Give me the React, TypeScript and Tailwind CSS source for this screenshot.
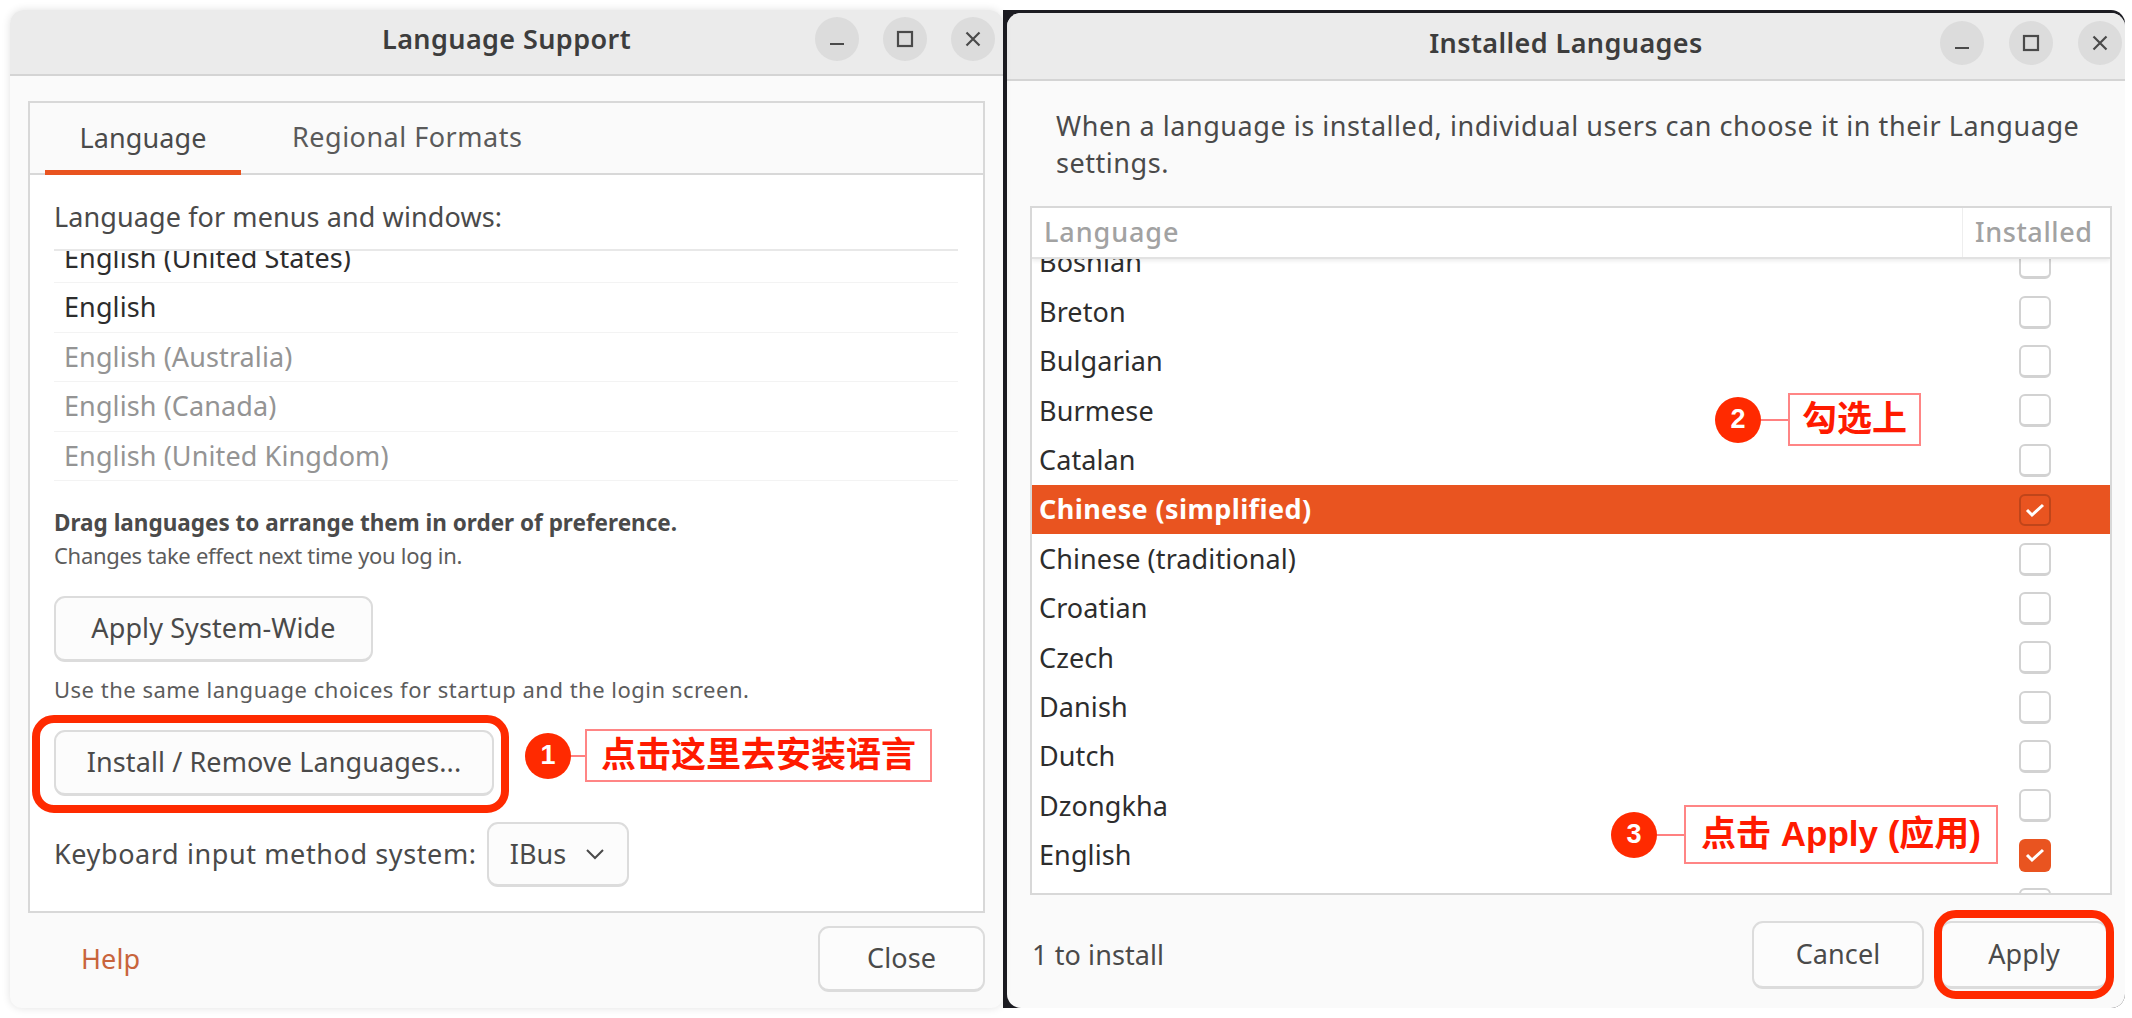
import React from 'react';

const languages = [
  'Bosnian',
  'Breton',
  'Bulgarian',
  'Burmese',
  'Catalan',
  'Chinese (simplified)',
  'Chinese (traditional)',
  'Croatian',
  'Czech',
  'Danish',
  'Dutch',
  'Dzongkha',
  'English',
  '',
];

const TitleIcon: React.FC<{ kind: 'min' | 'max' | 'close' }> = ({ kind }) => (
  <div className="w-[44px] h-[44px] rounded-full bg-[#dcdcdc] flex items-center justify-center">
    <svg width="20" height="20" viewBox="0 0 20 20" fill="none" stroke="#4a4a4a" strokeWidth="2.2">
      {kind === 'min' && <path d="M3 15h14" />}
      {kind === 'max' && <rect x="3" y="3" width="14" height="14" />}
      {kind === 'close' && <path d="M3.5 3.5l13 13M16.5 3.5l-13 13" />}
    </svg>
  </div>
);

const TitleBar: React.FC<{ title: string; heightClass: string; gapClass: string; rightClass: string }> = ({
  title,
  heightClass,
  gapClass,
  rightClass,
}) => (
  <div className={`relative flex items-center justify-end bg-[#ebebeb] border-b-2 border-[#d4d4d4] pb-[6px] shrink-0 ${heightClass} ${rightClass}`}>
    <div className="absolute inset-x-0 text-center font-semibold text-[27px] text-[#3d3d3d] tracking-[0.4px]">{title}</div>
    <div className={`flex items-center ${gapClass}`}>
      <TitleIcon kind="min" />
      <TitleIcon kind="max" />
      <TitleIcon kind="close" />
    </div>
  </div>
);

const GtkButton: React.FC<{ children: React.ReactNode; className: string }> = ({ children, className }) => (
  <div className={`flex items-center justify-center bg-[#fcfcfc] border-2 border-[#dcdcdc] border-b-[3px] rounded-[11px] text-[#4a4a4a] ${className}`}>
    {children}
  </div>
);

const Checkbox: React.FC<{ checked?: boolean; selected?: boolean }> = ({ checked, selected }) => {
  if (selected) {
    return (
      <div className="w-[32px] h-[32px] rounded-[6px] bg-[#e95420] border-2 border-[#c0451a] flex items-center justify-center">
        <svg width="22" height="18" viewBox="0 0 22 18" fill="none" stroke="#ffffff" strokeWidth="3">
          <path d="M3 9l5 5L19 4" />
        </svg>
      </div>
    );
  }
  if (checked) {
    return (
      <div className="w-[32px] h-[33px] rounded-[6px] bg-[#e95420] flex items-center justify-center">
        <svg width="22" height="18" viewBox="0 0 22 18" fill="none" stroke="#ffffff" strokeWidth="3">
          <path d="M3 9l5 5L19 4" />
        </svg>
      </div>
    );
  }
  return <div className="w-[32px] h-[33px] rounded-[6px] bg-white border-2 border-[#d2d2d2] border-b-[3px]" />;
};

const Callout: React.FC<{ num: string; text: string; className: string; lineClass: string; boxClass: string }> = ({
  num,
  text,
  className,
  lineClass,
  boxClass,
}) => (
  <div className={`absolute flex items-center tracking-normal font-['Liberation_Sans','Noto_Sans_CJK_SC',sans-serif] ${className}`}>
    <div className="w-[46px] h-[46px] rounded-full bg-[#ff2a00] text-white text-[27px] font-bold flex items-center justify-center shrink-0">{num}</div>
    <div className={`h-[2px] bg-[#ff8080] shrink-0 ${lineClass}`} />
    <div className={`border-2 border-[#ff8585] bg-white text-[#ff1a00] text-[35px] font-semibold flex items-center justify-center whitespace-pre shrink-0 ${boxClass}`}>
      {text}
    </div>
  </div>
);

const LanguageSupport: React.FC = () => {
  const rows = [
    { label: 'English (United States)', dim: false },
    { label: 'English', dim: false },
    { label: 'English (Australia)', dim: true },
    { label: 'English (Canada)', dim: true },
    { label: 'English (United Kingdom)', dim: true },
  ];
  return (
    <div className="relative z-10 w-[993px] h-[998px] shrink-0 flex flex-col bg-[#fafafa] rounded-t-[14px] rounded-b-[12px] overflow-hidden shadow-[0_0_8px_rgba(0,0,0,0.12)]">
      <TitleBar title="Language Support" heightClass="h-[66px]" gapClass="gap-[24px]" rightClass="pr-[8px]" />
      <div className="mt-[25px] mx-[18px] w-[957px] h-[812px] flex flex-col border-2 border-[#d8d8d8] shrink-0">
        <div className="h-[72px] flex items-end border-b-2 border-[#d8d8d8] bg-[#fafafa] pl-[15px] shrink-0">
          <div className="w-[196px] h-[67px] -mb-[2px] pb-[2px] flex items-center justify-center border-b-[5px] border-[#e95420] text-[#4a4a4a]">Language</div>
          <div className="ml-[51px] text-[#5a5a5a] h-[67px] pb-[4px] flex items-center tracking-[0.5px]">Regional Formats</div>
        </div>
        <div className="flex-1 bg-white px-[24px] flex flex-col min-h-0 text-[#4a4a4a]">
          <div className="mt-[27px] h-[30px] leading-[30px]">Language for menus and windows:</div>
          <div className="mt-[17px] w-[904px] h-[234px] border-t-2 border-[#e8e8e8] overflow-hidden">
            <div className="-mt-[17px]">
              {rows.map((r) => (
                <div
                  key={r.label}
                  className={`h-[49.4px] pl-[10px] flex items-center border-b border-[#f3f3f3] ${r.dim ? 'text-[#949494]' : 'text-[#2d2d2d]'}`}
                >
                  {r.label}
                </div>
              ))}
            </div>
          </div>
          <div className="mt-[24px] h-[32px] leading-[32px] text-[22.5px] font-bold tracking-normal text-[#4a4a4a]">Drag languages to arrange them in order of preference.</div>
          <div className="h-[32px] leading-[32px] text-[22px] tracking-[-0.3px] text-[#5c5c5c]">Changes take effect next time you log in.</div>
          <GtkButton className="mt-[25px] w-[319px] h-[66px]">Apply System-Wide</GtkButton>
          <div className="mt-[11px] h-[32px] leading-[32px] text-[22px] tracking-[0.5px] text-[#5c5c5c]">Use the same language choices for startup and the login screen.</div>
          <GtkButton className="mt-[25px] w-[440px] h-[66px]">Install / Remove Languages...</GtkButton>
          <div className="mt-[26px] flex items-center">
            <div className="w-[418px] tracking-[0.6px] whitespace-nowrap">Keyboard input method system:</div>
            <GtkButton className="ml-[15px] w-[142px] h-[65px] gap-[18px]">
              <span>IBus</span>
              <svg width="22" height="14" viewBox="0 0 22 14" fill="none" stroke="#4a4a4a" strokeWidth="2">
                <path d="M3 3l8 8 8-8" />
              </svg>
            </GtkButton>
          </div>
        </div>
      </div>
      <div className="mx-[18px] mt-[13px] flex items-center justify-between">
        <div className="ml-[53px] text-[#c8643c]">Help</div>
        <GtkButton className="w-[167px] h-[66px]">Close</GtkButton>
      </div>
    </div>
  );
};

const InstalledLanguages: React.FC = () => (
  <div className="w-[1122px] h-[998px] shrink-0 bg-[#1c1c22] pl-[4px] pt-[3px] rounded-tr-[14px] rounded-br-[14px]">
    <div className="h-[995px] w-[1118px] flex flex-col bg-[#fafafa] rounded-[14px] overflow-hidden">
      <TitleBar title="Installed Languages" heightClass="h-[68px]" gapClass="gap-[25px]" rightClass="pr-[3px]" />
      <div className="mt-[26px] mx-[49px] leading-[37px] text-[#4a4a4a] tracking-[0.55px] whitespace-nowrap">
        When a language is installed, individual users can choose it in their Language
        <br />
        settings.
      </div>
      <div className="mt-[25px] mx-[23px] w-[1082px] h-[689px] flex flex-col border-2 border-[#d8d8d8] bg-white shrink-0 overflow-hidden">
        <div className="h-[51px] flex border-b-2 border-[#e2e2e2] shrink-0 font-medium text-[#a2a2a2] shadow-[0_2px_4px_rgba(0,0,0,0.08)] relative z-10 bg-white">
          <div className="flex-1 pl-[12px] flex items-center tracking-[0.9px]">Language</div>
          <div className="w-[148px] border-l border-[#eeeeee] pl-[12px] flex items-center tracking-[0.6px]">Installed</div>
        </div>
        <div className="flex-1 min-h-0 overflow-hidden">
          <div className="-mt-[21px]">
            {languages.map((name) => {
              const selected = name === 'Chinese (simplified)';
              return (
                <div
                  key={name || 'next'}
                  className={`h-[49.4px] flex items-center justify-between pl-[7px] pr-[59px] ${selected ? 'bg-[#e95420] text-white font-bold tracking-[0.4px]' : 'text-[#2d2d2d]'}`}
                >
                  <span>{name}</span>
                  <Checkbox selected={selected} checked={name === 'English'} />
                </div>
              );
            })}
          </div>
        </div>
      </div>
      <div className="mx-[25px] mt-[26px] flex items-center justify-between">
        <div className="text-[#4a4a4a]">1 to install</div>
        <div className="flex items-center gap-[16px] -mr-[8px]">
          <GtkButton className="w-[172px] h-[68px]">Cancel</GtkButton>
          <GtkButton className="w-[168px] h-[68px]">Apply</GtkButton>
        </div>
      </div>
    </div>
  </div>
);

export default function App() {
  return (
    <div className="relative w-[2132px] h-[1018px] overflow-hidden bg-white pt-[10px] pl-[10px] flex text-[27px] tracking-[0.1px] font-['Noto_Sans',sans-serif]">
      <LanguageSupport />
      <InstalledLanguages />

      {/* red highlight frames */}
      <div className="absolute z-20 left-[32px] top-[715px] w-[477px] h-[98px] border-[8px] border-[#ff2a00] rounded-[22px]" />
      <div className="absolute z-20 left-[1934px] top-[910px] w-[180px] h-[89px] border-[8px] border-[#ff2a00] rounded-[22px]" />

      {/* numbered callouts */}
      <Callout num="1" text="点击这里去安装语言" className="z-20 left-[525px] top-[729px] h-[53px]" lineClass="w-[14px]" boxClass="w-[347px] h-[53px]" />
      <Callout num="2" text="勾选上" className="z-20 left-[1715px] top-[393px] h-[53px]" lineClass="w-[27px]" boxClass="w-[133px] h-[53px]" />
      <Callout num="3" text="点击 Apply (应用)" className="z-20 left-[1611px] top-[805px] h-[59px]" lineClass="w-[27px]" boxClass="w-[314px] h-[59px]" />
    </div>
  );
}
